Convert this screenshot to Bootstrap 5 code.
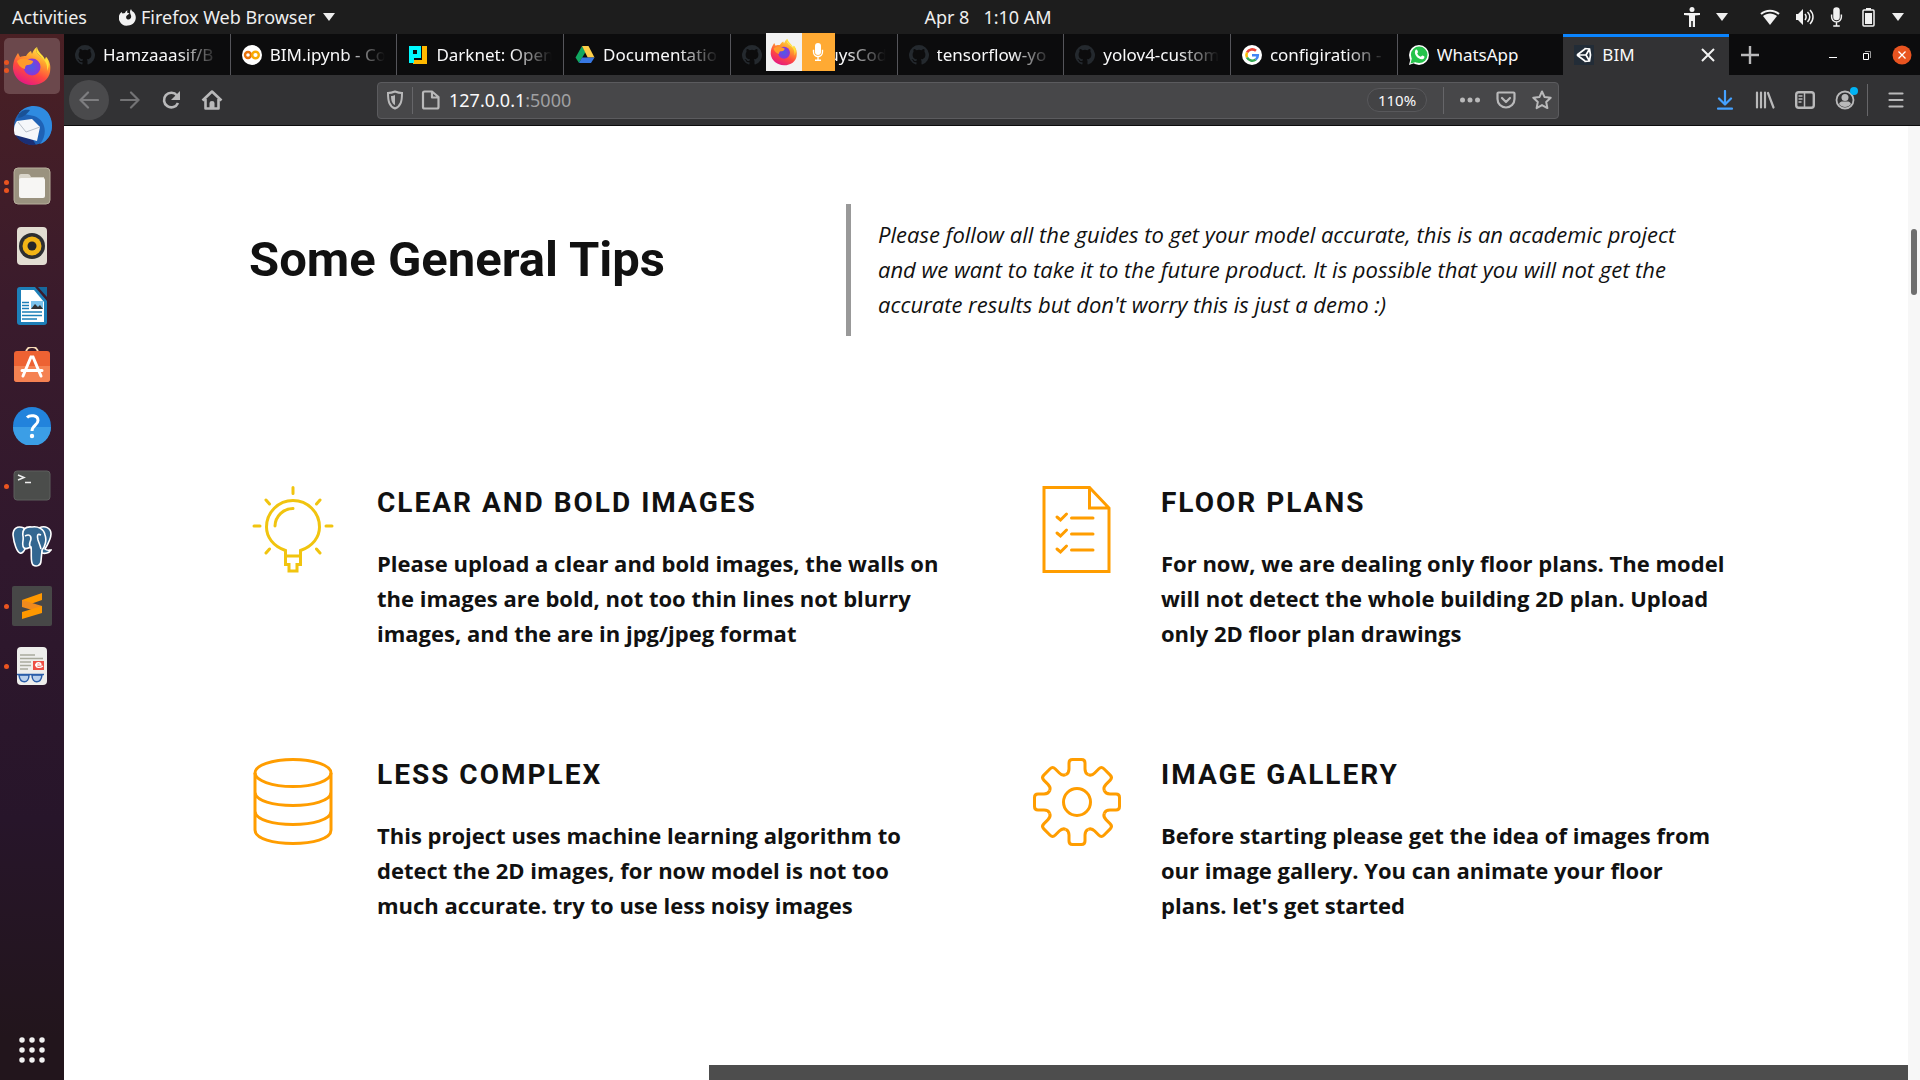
<!DOCTYPE html>
<html lang="en">
<head>
<meta charset="utf-8">
<meta name="viewport" content="width=device-width, initial-scale=1">
<title>BIM</title>
<link href="https://cdn.jsdelivr.net/npm/bootstrap@5.3.0/dist/css/bootstrap.min.css" rel="stylesheet">
<style>
  body { font-family: "Noto Sans", "Open Sans", sans-serif; font-size: 17px; overflow: hidden; background: #fff; }
  button { border: 0; padding: 0; background: none; color: inherit; }
  svg { display: block; flex: none; }

  /* system bar */
  .sysbar { height: 34px; background: #1d1d1d; color: #eee; font-size: 18px; line-height: 24px; }
  .sysbar-side { flex: 1 1 0; }
  .clock { margin-left: 64px; white-space: pre; }
  .status-icons { gap: 16px; }
  .status-icons .status-gap { margin-left: 16px; }

  /* dock */
  .dock { width: 64px; padding: 4px 4px 2px; gap: 4px; background: linear-gradient(#4a2024 0, #3a1b2c 26%, #30182d 50%, #27152a 75%, #22151c 96%); }
  .dock-item { width: 56px; height: 56px; border-radius: 5px; }
  .dock-item.active { background: #6b484c; }
  .run-dots { left: 0; top: 0; bottom: 0; width: 5px; gap: 3px; }
  .run-dots i { width: 5px; height: 5px; border-radius: 50%; background: #e95420; }

  /* browser chrome */
  .work-area { min-width: 0; min-height: 0; }
  .tabstrip { height: 41px; background: #0c0c0d; color: #f9f9fa; }
  .tabs { flex: 0 1 1665px; min-width: 0; }
  .tab-cell { flex: 1 1 0; min-width: 0; padding: 0 11px; gap: 8px; border-right: 1px solid #55555a; }
  .tab-cell.last-bg { border-right: 0; }
  .tab-cell.current { background: #323234; box-shadow: inset 0 3px #0a84ff; border-right: 0; }
  .tab-title { flex: 1 1 0; min-width: 0; overflow: hidden; white-space: nowrap; color: inherit; text-decoration: none; }
  .fade-out { -webkit-mask-image: linear-gradient(90deg, #000 65%, transparent); mask-image: linear-gradient(90deg, #000 65%, transparent); }
  .share-pill { left: 35px; top: -1px; height: 38px; z-index: 3; }
  .share-fox { width: 36px; background: #f2f2f2; }
  .share-mic { width: 33px; background: #ffaa33; }
  .win-tools { flex: 1 0 191px; padding: 0 8px 0 11px; }
  .toolbar-row { height: 51px; background: #323234; border-bottom: 1px solid #0c0c0d; color: #b9b9ba; }
  .nav-tools { width: 313px; padding-left: 5px; gap: 1px; }
  .nav-tools button { width: 40px; height: 40px; }
  .nav-tools .back { background: #4a4a4c; border-radius: 50%; color: #7e7e80; }
  .nav-tools .fwd { color: #737375; }
  .urlbar { height: 37px; background: #474749; border: 1px solid #5b5b5e; border-radius: 4px; padding: 0 6px 0 8px; }
  .url-text { font-size: 18px; color: #f9f9fa; }
  .url-text span { color: #a0a0a2; }
  .zoom-pill { font-size: 15px; line-height: 22px; width: 60px; border: 1px solid #58585b; border-radius: 12px; color: #f9f9fa; background: #434345; }
  .rule-v { width: 1px; background: #666669; }
  .right-tools { width: 361px; padding-right: 4px; }
  .right-tools button { width: 40px; height: 40px; }
  .right-tools .rule-v { margin: 0 8px 0 2px; }

  /* page */
  .viewport-area { min-height: 0; background: #fff; color: #111; }
  .scroll-track { width: 12px; background: #f7f7f7; padding-top: 103px; }
  .scroll-thumb { width: 6px; height: 66px; border-radius: 3px; background: #6e6e6e; margin-left: 3px; }
  .tips { max-width: 1568px; padding: 78px 47px 0; }
  .tips-title { font: 700 49px/60px Roboto, sans-serif; padding-top: 26px; margin: 0; }
  .intro-quote { border-left: 5px solid #999; padding: 13px 0 14px 27px; font: italic 22px/35px "Open Sans", sans-serif; margin: 0; }
  .intro-left { flex: 0 0 597px; }
  .tip-grid { --bs-gutter-x: 94px; --bs-gutter-y: 0; margin-top: 150px; }
  .tip-cell { gap: 40px; height: 272px; }
  .tip-name { font: 700 28px/34px Roboto, sans-serif; letter-spacing: 2px; text-transform: uppercase; margin: 0 0 26px; }
  .tip-text { font: 700 22px/35px "Open Sans", sans-serif; margin: 0; }
  .strip { width: 65%; height: 15px; background: #4d4d4d; }
</style>
<script src="https://cdn.jsdelivr.net/npm/bootstrap@5.3.0/dist/js/bootstrap.bundle.min.js"></script>
</head>
<body class="vh-100 d-flex flex-column">

<svg width="0" height="0" class="position-absolute" aria-hidden="true">
  <defs>
    <linearGradient id="foxg" x1=".8" y1="0" x2=".3" y2="1"><stop offset="0" stop-color="#fff44f"/><stop offset=".35" stop-color="#ffa02e"/><stop offset=".65" stop-color="#ff4a3f"/><stop offset="1" stop-color="#e31587"/></linearGradient>
    <radialGradient id="foxp"><stop offset="0" stop-color="#4a5ce8"/><stop offset="1" stop-color="#8a35d8"/></radialGradient>
    <symbol id="fox" viewBox="0 0 40 40">
      <path fill="url(#foxg)" d="M25 1c-2 4 0 6 3 9 3 2 4 3 5 4l1-3c4 4 5 9 4 15-1 7-8 13-18 13S2 32 1 23c0-6 1-10 5-16l2 4c2-1 4-1 6-1 2-3 3-4 5-5l1 3c1-3 2-5 5-7z"/>
      <path fill="#ffe03a" d="M25 1c-2 4 0 6 3 9 5 4 8 8 7 15 3-6 2-11-1-14l-1 3c-1-5-7-7-8-13z"/>
      <circle cx="20" cy="21" r="8.500" fill="url(#foxp)"/>
      <path fill="#ff9a2b" d="M5 15c3-3 7-3 10-2l6 2c0 3-3 4-6 4-2 1-2 2-2 4-4-1-7-4-8-8z"/>
    </symbol>
    <symbol id="hub" viewBox="0 0 16 16"><path fill="#24292e" d="M8 0a8 8 0 0 0-2.500 15.600c.4.100.5-.2.500-.4v-1.500c-2.200.5-2.700-.9-2.700-.9-.4-.9-.9-1.200-.9-1.200-.7-.5.1-.5.1-.5.800.1 1.200.8 1.200.8.700 1.200 1.900.9 2.300.7.100-.5.300-.9.500-1.100-1.800-.2-3.600-.9-3.600-4 0-.9.300-1.600.8-2.100-.1-.2-.4-1 .1-2.100 0 0 .7-.2 2.200.8a7.500 7.500 0 0 1 4 0c1.500-1 2.200-.8 2.200-.8.400 1.100.2 1.900.1 2.100.5.600.8 1.300.8 2.100 0 3.100-1.900 3.800-3.700 4 .3.300.600.8.600 1.500v2.200c0 .2.100.5.500.4A8 8 0 0 0 8 0z"/></symbol>
    <symbol id="mic" viewBox="0 0 16 24"><path fill="currentColor" d="M8 0a4 4 0 0 0-4 4v8a4 4 0 0 0 8 0V4a4 4 0 0 0-4-4z"/><path fill="none" stroke="currentColor" stroke-width="1.800" d="M2 9v3a6 6 0 0 0 12 0V9M8 18v4M4 23h8"/></symbol>
    <symbol id="tri" viewBox="0 0 12 8"><path fill="currentColor" d="M0 0h12L6 8z"/></symbol>
  </defs>
</svg>

<header class="sysbar d-flex align-items-center">
  <div class="sysbar-side d-flex align-items-center ps-2">
    <button class="ms-1">Activities</button>
    <button class="d-flex align-items-center ms-4 ps-2 gap-1">
      <svg width="18" height="18" viewBox="0 0 18 18"><path fill="#f2f2f2" d="M9 17.500A7.800 7.800 0 0 1 2.500 4l1 1.500L6 5c.5-1.500 1.300-2.200 2.500-2.700L8 4.500l2.500 1L8.500 7C6.500 8 6.700 11 9 11.500c2.800.3 4-2.600 2.600-5C11 5 10.500 3 12 1c.5 2 2 2.500 3 3.500 4 5 1 13-6 13z"/></svg>
      <span>Firefox Web Browser</span>
      <svg class="ms-1" width="12" height="8"><use href="#tri"/></svg>
    </button>
  </div>
  <button class="clock">Apr 8   1:10 AM</button>
  <div class="status-icons sysbar-side d-flex align-items-center justify-content-end pe-3">
    <svg width="16" height="20" viewBox="0 0 16 20" fill="#f2f2f2"><circle cx="8" cy="2.500" r="2.500"/><path d="M0 6h16v2l-5 .5V20H8.800v-6H7.200v6H5V8.500L0 8z"/></svg>
    <svg width="12" height="8"><use href="#tri"/></svg>
    <svg class="status-gap" width="20" height="17" viewBox="0 0 20 17"><path fill="#f2f2f2" d="M3 7c4-3.500 10-3.500 14 0l-7 9z"/><path fill="none" stroke="#f2f2f2" stroke-width="2" d="M1 5c5-4.500 13-4.500 18 0"/></svg>
    <svg width="18" height="18" viewBox="1 0 18 18"><path fill="#f2f2f2" d="M0 6h3l5-5v16l-5-5H0z"/><path fill="none" stroke="#f2f2f2" stroke-width="1.500" d="M10 6c1.500 2 1.500 4 0 6M12.500 4c3 3 3 7 0 10M15 2c4 4 4 10 0 14"/></svg>
    <svg width="13" height="20" color="#f2f2f2"><use href="#mic"/></svg>
    <svg width="17" height="19" viewBox="-3 0 17 19"><path fill="#f2f2f2" d="M4 0h5v2H4zM3 5h7v11H3z"/><rect x="1" y="2" width="11" height="16" rx="1" fill="none" stroke="#f2f2f2" stroke-width="1.500"/></svg>
    <svg width="12" height="8"><use href="#tri"/></svg>
  </div>
</header>

<div class="work-area d-flex flex-grow-1">
  <nav class="dock d-flex flex-column flex-shrink-0" aria-label="Dock">
    <button class="dock-item active position-relative d-flex align-items-center justify-content-center" aria-label="Firefox"><span class="run-dots position-absolute d-flex flex-column justify-content-center"><i></i><i></i></span><svg width="40" height="40"><use href="#fox"/></svg></button>
    <button class="dock-item d-flex align-items-center justify-content-center" aria-label="Thunderbird"><svg width="42" height="42" viewBox="0 0 42 42"><circle cx="22" cy="21" r="19" fill="#1f62b5"/><path fill="#2f8be0" d="M8 8C14 0 26-1 33 4c8 5 10 18 6 26-2 4-6 8-10 9 8-10 6-24-6-28-5-1-10-2-15-3z"/><path fill="#1b2f75" d="M3 28c4 8 12 13 22 12l-3-5z"/><path fill="#f5f7fa" d="M6 16l15-2 8 8-3 14L4 30c-2-5-1-10 2-14z"/><path fill="none" stroke="#b8bfc9" d="M7 17l8 10 14-5"/><path fill="#1a5296" d="M7 13c1-7 6-9 12-8-3 4-6 7-12 8z"/></svg></button>
    <button class="dock-item position-relative d-flex align-items-center justify-content-center" aria-label="Files"><span class="run-dots position-absolute d-flex flex-column justify-content-center"><i></i><i></i></span><svg width="38" height="38" viewBox="0 0 38 38"><rect x="1" y="1" width="36" height="36" rx="4" fill="#9a927f" stroke="#b7af9c"/><path fill="#d9d5ca" d="M6 9q0-2 2-2h7q2 0 3 3H31v6H6z"/><rect x="6" y="11" width="26" height="20" rx="2" fill="#f7f6f4"/></svg></button>
    <button class="dock-item d-flex align-items-center justify-content-center" aria-label="Rhythmbox"><svg width="32" height="38" viewBox="0 0 32 38"><rect x="1" width="30" height="38" rx="4" fill="#e2ddd2"/><circle cx="16" cy="19" r="13" fill="#2d2f31"/><circle cx="16" cy="19" r="9.500" fill="#f2b516"/><circle cx="16" cy="19" r="4.500" fill="#24262a"/></svg></button>
    <button class="dock-item d-flex align-items-center justify-content-center" aria-label="LibreOffice Writer"><svg width="32" height="38" viewBox="0 0 32 38"><path fill="#1d7fb8" d="M4 0h15l12 14v21q0 3-3 3H4q-3 0-3-3V3q0-3 3-3z"/><path fill="#fff" d="M5 3h13l10 12v20H5z"/><path fill="#17689c" d="M22 0h9v10z"/><path stroke="#1d7fb8" stroke-width="1.500" d="M6 15.500h7M6 18.500h7M6 21.500h7M6 25h20M6 28.500h20M6 32h15"/><rect x="15" y="14" width="12" height="8" fill="#7cc3ec"/><path fill="#333" d="M15 22l4-5 3 3 2-2 3 4z"/></svg></button>
    <button class="dock-item d-flex align-items-center justify-content-center" aria-label="Ubuntu Software"><svg width="38" height="38" viewBox="0 0 38 38"><path fill="none" stroke="#f6d9b5" stroke-width="2" d="M13 6c0-8 12-8 12 0"/><rect x="1" y="4" width="36" height="31" rx="3" fill="#ed6233"/><path fill="#f58252" d="M1 19h36v13q0 3-3 3H4q-3 0-3-3z"/><path fill="none" stroke="#fff" stroke-width="3" stroke-linecap="round" d="M10 29l8-19h2l8 19M9 23.500h20"/></svg></button>
    <button class="dock-item d-flex align-items-center justify-content-center" aria-label="Help"><svg width="38" height="38" viewBox="0 0 38 38"><circle cx="19" cy="19" r="19" fill="#2283dc"/><path fill="#3b9ee6" d="M0 20h38a19 19 0 0 1-38 0z"/><path fill="none" stroke="#fff" stroke-width="3" d="M14 10.500c3-3 11-2.500 11 3 0 4.500-6 5-6 10.500"/><circle cx="19" cy="29" r="2.200" fill="#fff"/></svg></button>
    <button class="dock-item position-relative d-flex align-items-center justify-content-center" aria-label="Terminal"><span class="run-dots position-absolute d-flex flex-column justify-content-center"><i></i></span><svg width="38" height="32" viewBox="0 0 38 32"><rect x="1" y="1" width="36" height="29" rx="3" fill="#4b4d4b" stroke="#5d5f5d"/><path fill="none" stroke="#eee" stroke-width="1.500" d="M5 5l6 2.500L5 10M12 12.500h6"/></svg></button>
    <button class="dock-item d-flex align-items-center justify-content-center" aria-label="pgAdmin"><svg width="40" height="42" viewBox="0 0 40 42"><g fill="#336791" stroke="#fff" stroke-width="1.600"><path d="M12 3C5 0 1 4 1 10c1 9 4 17 7 18 2 1 4-2 5-4z"/><path d="M27 3c6-3 12 0 12 6 0 5-3 10-6 15 2 2 4 1 6 1-2 3-6 4-9 3z"/><path d="M20 2c-7-1-10 3-9 9 1 5-2 9 1 12 3 2 5-1 7-1 1 5-1 15 2 18 3 2 8 1 8-4l1-11c3-3 5-10 3-15-1-6-7-9-13-8z"/><path fill="none" d="M13 11c6-3 7 2 5 6-1 3 0 5 1 6M29 10c-4-2-4 1-3 5 1 3 2 5 3 9"/></g></svg></button>
    <button class="dock-item position-relative d-flex align-items-center justify-content-center" aria-label="Sublime Text"><span class="run-dots position-absolute d-flex flex-column justify-content-center"><i></i></span><svg width="40" height="40" viewBox="0 0 40 40"><rect width="40" height="40" rx="2" fill="#474747"/><path fill="#ff9800" d="M10 14l20-7v7l-20 7z"/><path fill="#f08a1d" d="M10 14l20 6v7l-20-6z"/><path fill="#ff9800" d="M10 26l20-6v7l-20 6z"/></svg></button>
    <button class="dock-item position-relative d-flex align-items-center justify-content-center" aria-label="Document Viewer"><span class="run-dots position-absolute d-flex flex-column justify-content-center"><i></i></span><svg width="32" height="38" viewBox="0 0 32 38"><rect x="1" width="30" height="38" rx="4" fill="#eeeeec"/><path stroke="#a9aa9d" stroke-width="1.500" d="M4 8h15M4 11.500h23M4 15h11M4 18.500h11M4 22h8"/><rect x="17" y="14" width="11" height="9" fill="#ee4f45"/><path fill="none" stroke="#fff" stroke-width="1.300" d="M19 18h6c0-3-5-3-5 0s4 3 7 1"/><g fill="#b9d0ec" stroke="#2a5da8" stroke-width="1.500"><path d="M3 28h10c0 9-9 9-10 0zM16 28h10c-1 9-10 9-10 0z"/><path d="M1 27.500h27"/></g></svg></button>
    <button class="dock-item mt-auto d-flex align-items-center justify-content-center" aria-label="Show Applications"><svg width="26" height="26" viewBox="0 0 26 26"><g stroke="#f2f2f2" stroke-width="5.500" stroke-linecap="round"><path d="M3 3h0M13 3h0M23 3h0M3 13h0M13 13h0M23 13h0M3 23h0M13 23h0M23 23h0"/></g></svg></button>
  </nav>

  <div class="work-area d-flex flex-column flex-grow-1">
    <div class="tabstrip d-flex flex-shrink-0">
      <div class="tabs d-flex">
        <div class="tab-cell d-flex align-items-center"><svg width="20" height="20"><use href="#hub"/></svg><a class="tab-title fade-out" href="#">Hamzaaasif/B</a></div>
        <div class="tab-cell d-flex align-items-center"><svg width="20" height="20" viewBox="0 0 20 20"><circle cx="10" cy="10" r="10" fill="#fff"/><g fill="none" stroke-width="2.400"><circle cx="6" cy="10" r="3" stroke="#e8710a"/><circle cx="13.500" cy="10" r="3.300" stroke="#f9ab00"/></g></svg><a class="tab-title fade-out" href="#">BIM.ipynb - Co</a></div>
        <div class="tab-cell d-flex align-items-center"><svg width="20" height="20" viewBox="0 0 20 20"><path fill="#ffb900" d="M14 1h5v18H5v-4h9z"/><path fill="#00fbff" d="M1 1h12v12H6v5H1z"/><path fill="#0c0c0d" d="M5 5h4v4H5z"/></svg><a class="tab-title fade-out" href="#">Darknet: Open</a></div>
        <div class="tab-cell d-flex align-items-center"><svg width="20" height="20" viewBox="0 0 20 20"><path fill="#11a861" d="M7 1l3.500 6L4 18l-3.500-5.500z"/><path fill="#ffcf48" d="M7 1h6.500l6 11.500h-6.800z"/><path fill="#3777e3" d="M7 12.500h12.500L16 18H4z"/></svg><a class="tab-title fade-out" href="#">Documentatio</a></div>
        <div class="tab-cell position-relative d-flex align-items-center"><svg width="20" height="20"><use href="#hub"/></svg><a class="tab-title fade-out" href="#">TheAIGuysCod</a>
          <div class="share-pill position-absolute d-flex">
            <span class="share-fox d-flex align-items-center justify-content-center"><svg width="28" height="28"><use href="#fox"/></svg></span>
            <span class="share-mic d-flex align-items-center justify-content-center text-white"><svg width="12" height="18"><use href="#mic"/></svg></span>
          </div>
        </div>
        <div class="tab-cell d-flex align-items-center"><svg width="20" height="20"><use href="#hub"/></svg><a class="tab-title fade-out" href="#">tensorflow-yo</a></div>
        <div class="tab-cell d-flex align-items-center"><svg width="20" height="20"><use href="#hub"/></svg><a class="tab-title fade-out" href="#">yolov4-custom</a></div>
        <div class="tab-cell d-flex align-items-center"><svg width="20" height="20" viewBox="0 0 20 20"><circle cx="10" cy="10" r="10" fill="#fff"/><g fill="none" stroke-width="2.600"><path stroke="#ea4335" d="M5 7.500A5.800 5.800 0 0 1 14 5.800"/><path stroke="#fbbc05" d="M5 12.500a5.800 5.800 0 0 1 0-5"/><path stroke="#34a853" d="M13.700 14.500A5.800 5.800 0 0 1 5 12.500"/><path stroke="#4285f4" d="M10 10.200h5.800c0 2-.8 3.400-2.100 4.300"/></g></svg><a class="tab-title fade-out" href="#">configiration -</a></div>
        <div class="tab-cell last-bg d-flex align-items-center"><svg width="20" height="20" viewBox="0 0 20 20"><circle cx="10" cy="10" r="10" fill="#fff"/><path fill="#fff" d="M0 20l1.500-6 4 4z"/><circle cx="10.200" cy="9.800" r="8.300" fill="#25c34b"/><path fill="#25c34b" d="M1.500 18.500L3 13l4 4z"/><path fill="#fff" d="M6.500 5c1-1 1.700-.5 2.500 2 0 .8-1 1-.7 1.700.8 1.500 2 2.500 3.500 3 .6 0 1-1.300 1.700-1.200 2 .8 2.300 1 1.700 2.400-.8 1.700-3.500 1.700-6 0C6.500 11 5 8 6.500 5z"/></svg><a class="tab-title" href="#">WhatsApp</a></div>
        <div class="tab-cell current d-flex align-items-center"><svg width="20" height="20" viewBox="0 0 20 20"><rect width="20" height="20" fill="#222c37"/><path fill="none" stroke="#fff" stroke-width="1.700" d="M3 10l8-6M3 10l8 6M3 10h9M12 10l3.500-6M12 10l3.500 6M10.500 3.500l5 .5 1 6-1 6-5 .5"/></svg><a class="tab-title" href="#">BIM</a>
          <button aria-label="Close tab"><svg width="20" height="14" viewBox="0 0 20 14"><path stroke="#f2f2f2" stroke-width="2" d="M4 1l12 12M16 1L4 13"/></svg></button></div>
      </div>
      <div class="win-tools d-flex align-items-center">
        <button aria-label="New tab"><svg width="20" height="20" viewBox="0 0 20 20"><path stroke="#b9b9ba" stroke-width="2.400" d="M10 1v18M1 10h18"/></svg></button>
        <div class="d-flex align-items-center ms-auto gap-3">
          <button aria-label="Minimize"><svg width="18" height="10" viewBox="0 0 18 10"><path stroke="#fff" d="M5 7.500h8"/></svg></button>
          <button aria-label="Restore"><svg width="18" height="10" viewBox="0 0 18 10"><path fill="none" stroke="#fff" d="M5.500 3.500h5v6h-5z"/><path fill="none" stroke="#999" d="M7 1.500h5.500V8"/></svg></button>
          <button aria-label="Close window"><svg width="20" height="20" viewBox="0 0 20 20"><circle cx="10" cy="10" r="9.500" fill="#e95420"/><path stroke="#fff" stroke-width="1.300" d="M6.500 6.500l7 7M13.500 6.500l-7 7"/></svg></button>
        </div>
      </div>
    </div>

    <div class="toolbar-row d-flex align-items-center flex-shrink-0">
      <div class="nav-tools d-flex">
        <button class="back d-flex align-items-center justify-content-center" aria-label="Back"><svg width="20" height="18" viewBox="0 0 20 18"><path fill="none" stroke="currentColor" stroke-width="2.200" stroke-linecap="round" d="M19 9H1.500M9 1.500L1.500 9 9 16.500"/></svg></button>
        <button class="fwd d-flex align-items-center justify-content-center" aria-label="Forward"><svg width="20" height="18" viewBox="0 0 20 18"><path fill="none" stroke="currentColor" stroke-width="2.200" stroke-linecap="round" d="M1 9h17.500M11 1.500L18.500 9 11 16.500"/></svg></button>
        <button class="d-flex align-items-center justify-content-center" aria-label="Reload"><svg width="20" height="20" viewBox="0 0 20 20"><path fill="none" stroke="currentColor" stroke-width="2.600" d="M16 5.500A7.300 7.300 0 1 0 17 13"/><path fill="currentColor" d="M19 1v9h-9z"/></svg></button>
        <button class="d-flex align-items-center justify-content-center" aria-label="Home"><svg width="22" height="20" viewBox="0 0 22 20"><path fill="none" stroke="currentColor" stroke-width="2.600" stroke-linejoin="round" d="M1.500 10.500L11 1.500l9.500 9M4.500 9v9.500h13V9"/><path fill="currentColor" d="M8.500 18v-5q0-2 2.500-2t2.500 2v5z"/></svg></button>
      </div>
      <div class="urlbar d-flex align-items-center flex-grow-1">
        <button aria-label="Tracking protection"><svg width="18" height="20" viewBox="0 0 18 20"><path fill="none" stroke="currentColor" stroke-width="2" d="M9 1.500c2.500 1 4.500 1.500 7 1.500 0 8-1 13-7 15.500C3 16 2 11 2 3c2.500 0 4.500-.5 7-1.500z"/><path fill="currentColor" d="M9 5c-1.500.7-2.500 1-4 1 .2 5 1 7.500 4 9z"/></svg></button>
        <span class="rule-v align-self-stretch my-1 ms-2 me-2"></span>
        <button aria-label="Site information"><svg width="20" height="20" viewBox="0 0 20 20"><path fill="none" stroke="currentColor" stroke-width="2.200" stroke-linejoin="round" d="M3.500 1.500H11l6.500 5.500v10q0 1.500-1.500 1.500H3.500q-1.500 0-1.500-1.500V3q0-1.500 1.500-1.500zM11 2v5.500h6"/></svg></button>
        <div class="url-text ms-2 flex-grow-1" role="textbox" aria-label="Address">127.0.0.1<span>:5000</span></div>
        <button class="zoom-pill">110%</button>
        <span class="rule-v align-self-stretch my-1 ms-3 me-3"></span>
        <div class="d-flex align-items-center gap-3">
          <button aria-label="Page actions"><svg width="20" height="6" viewBox="0 0 20 6" fill="currentColor"><circle cx="2.500" cy="3" r="2.500"/><circle cx="10" cy="3" r="2.500"/><circle cx="17.500" cy="3" r="2.500"/></svg></button>
          <button aria-label="Save to Pocket"><svg width="20" height="18" viewBox="0 0 20 18"><path fill="none" stroke="currentColor" stroke-width="2.200" stroke-linejoin="round" stroke-linecap="round" d="M2.500 1.500h15q1 0 1 1V8a8.500 8.500 0 0 1-17 0V2.500q0-1 1-1zM6 7l4 4 4-4"/></svg></button>
          <button aria-label="Bookmark"><svg width="20" height="20" viewBox="0 0 20 20"><path fill="none" stroke="currentColor" stroke-width="2" stroke-linejoin="round" d="M10 1.500l2.600 5.600 6.100.7-4.500 4.200 1.200 6.100L10 15.100l-5.400 3 1.200-6.100L1.300 7.800l6.100-.7z"/></svg></button>
        </div>
      </div>
      <div class="right-tools d-flex align-items-center justify-content-end">
        <button class="d-flex align-items-center justify-content-center" aria-label="Downloads"><svg width="18" height="20" viewBox="0 0 18 20"><path fill="none" stroke="#45a1ff" stroke-width="2.200" stroke-linecap="round" stroke-linejoin="round" d="M9 1v13M3 8.500l6 6 6-6M2 18.700h14"/></svg></button>
        <button class="d-flex align-items-center justify-content-center" aria-label="Library"><svg width="20" height="18" viewBox="0 0 20 18"><path stroke="currentColor" stroke-width="2.200" stroke-linecap="round" d="M2 1.500v15M6 1.500v15M10 1.500v15M13 2l5.500 14.500"/></svg></button>
        <button class="d-flex align-items-center justify-content-center" aria-label="Sidebars"><svg width="20" height="18" viewBox="0 0 20 18"><rect x="1.200" y="1.200" width="17.600" height="15.600" rx="2.500" fill="none" stroke="currentColor" stroke-width="2.400"/><path stroke="currentColor" stroke-width="1.500" d="M9.500 2v14M3.500 5h4M3.500 8h4M3.500 11h3"/></svg></button>
        <button class="d-flex align-items-center justify-content-center" aria-label="Account"><svg width="26" height="26" viewBox="0 0 26 26"><circle cx="13" cy="13" r="8.500" fill="none" stroke="currentColor" stroke-width="1.800"/><circle cx="13" cy="10.500" r="3.500" fill="currentColor"/><path fill="currentColor" d="M7 17c1-3 3-2.500 6-2.500s5-.5 6 2.500c-3 4-9 4-12 0z"/><circle cx="22" cy="4" r="4" fill="#00b3f4"/></svg></button>
        <span class="rule-v align-self-stretch my-1"></span>
        <button class="d-flex align-items-center justify-content-center" aria-label="Menu"><svg width="16" height="18" viewBox="0 0 16 18"><path stroke="currentColor" stroke-width="2.200" stroke-linecap="round" d="M1.500 2.500h13M1.500 9h13M1.500 15.500h13"/></svg></button>
      </div>
    </div>

    <div class="viewport-area d-flex flex-grow-1">
      <main class="flex-grow-1 d-flex flex-column">
        <section class="tips w-100 mx-auto">
          <div class="d-flex">
            <div class="intro-left"><h1 class="tips-title">Some General Tips</h1></div>
            <blockquote class="intro-quote flex-grow-1">Please follow all the guides to get your model accurate, this is an academic project<br>and we want to take it to the future product. It is possible that you will not get the<br>accurate results but don't worry this is just a demo :)</blockquote>
          </div>
          <div class="row tip-grid">
            <div class="col-6"><article class="tip-cell d-flex">
              <svg width="88" height="88" viewBox="0 0 88 88" fill="none" stroke="#f1c40f" stroke-width="3" stroke-linecap="round"><path d="M44 1.500v6M5 40h6M77 40h6M17 14l3.500 4M71 14l-3.500 4M17 67l3.500-4M71 67l-3.500-4"/><path d="M36.500 64.500C24 60 17.500 51 17.500 41a26.500 26.500 0 0 1 53 0c0 10-6.500 19-19 23.500v14H48V85h-8v-6.500h-3.500zM37 70h14M26 40a18 18 0 0 1 18-17.500"/></svg>
              <div><h2 class="tip-name">Clear and bold images</h2><p class="tip-text text-nowrap">Please upload a clear and bold images, the walls on<br>the images are bold, not too thin lines not blurry<br>images, and the are in jpg/jpeg format</p></div>
            </article></div>
            <div class="col-6"><article class="tip-cell d-flex">
              <svg width="88" height="88" viewBox="0 0 88 88" fill="none" stroke="#ff9d00" stroke-width="3"><path d="M11 1.500H56.500L76 22v63.500H11zM56.500 1.500V22H76"/><path stroke-linecap="round" d="M38.500 32H60M38.500 48H60M38.500 64H60M24 31l3.500 3 6-6M24 47l3.500 3 6-6M24 63l3.500 3 6-6"/></svg>
              <div><h2 class="tip-name">Floor plans</h2><p class="tip-text text-nowrap">For now, we are dealing only floor plans. The model<br>will not detect the whole building 2D plan. Upload<br>only 2D floor plan drawings</p></div>
            </article></div>
            <div class="col-6"><article class="tip-cell d-flex">
              <svg width="88" height="88" viewBox="0 0 88 88" fill="none" stroke="#ff9d00" stroke-width="3"><ellipse cx="44" cy="15" rx="38" ry="13.500"/><path d="M6 15v57c0 18 76 18 76 0V15M6 34c0 18 76 18 76 0M6 53c0 18 76 18 76 0"/></svg>
              <div><h2 class="tip-name">Less complex</h2><p class="tip-text text-nowrap">This project uses machine learning algorithm to<br>detect the 2D images, for now model is not too<br>much accurate. try to use less noisy images</p></div>
            </article></div>
            <div class="col-6"><article class="tip-cell d-flex">
              <svg width="88" height="88" viewBox="-44 -44 88 88" fill="none" stroke="#ff9d00" stroke-width="3"><circle r="13.500"/><path id="tooth" d="M-11.300-27.300Q-8-28.700-8-33V-39Q-8-42.500-4.500-42.500H4.500Q8-42.500 8-39V-33Q8-28.700 11.300-27.300"/><use href="#tooth" transform="rotate(45)"/><use href="#tooth" transform="rotate(90)"/><use href="#tooth" transform="rotate(135)"/><use href="#tooth" transform="rotate(180)"/><use href="#tooth" transform="rotate(225)"/><use href="#tooth" transform="rotate(270)"/><use href="#tooth" transform="rotate(315)"/></svg>
              <div><h2 class="tip-name">Image gallery</h2><p class="tip-text text-nowrap">Before starting please get the idea of images from<br>our image gallery. You can animate your floor<br>plans. let's get started</p></div>
            </article></div>
          </div>
        </section>
        <div class="strip ms-auto mt-auto"></div>
      </main>
      <div class="scroll-track flex-shrink-0"><div class="scroll-thumb"></div></div>
    </div>
  </div>
</div>
</body>
</html>
